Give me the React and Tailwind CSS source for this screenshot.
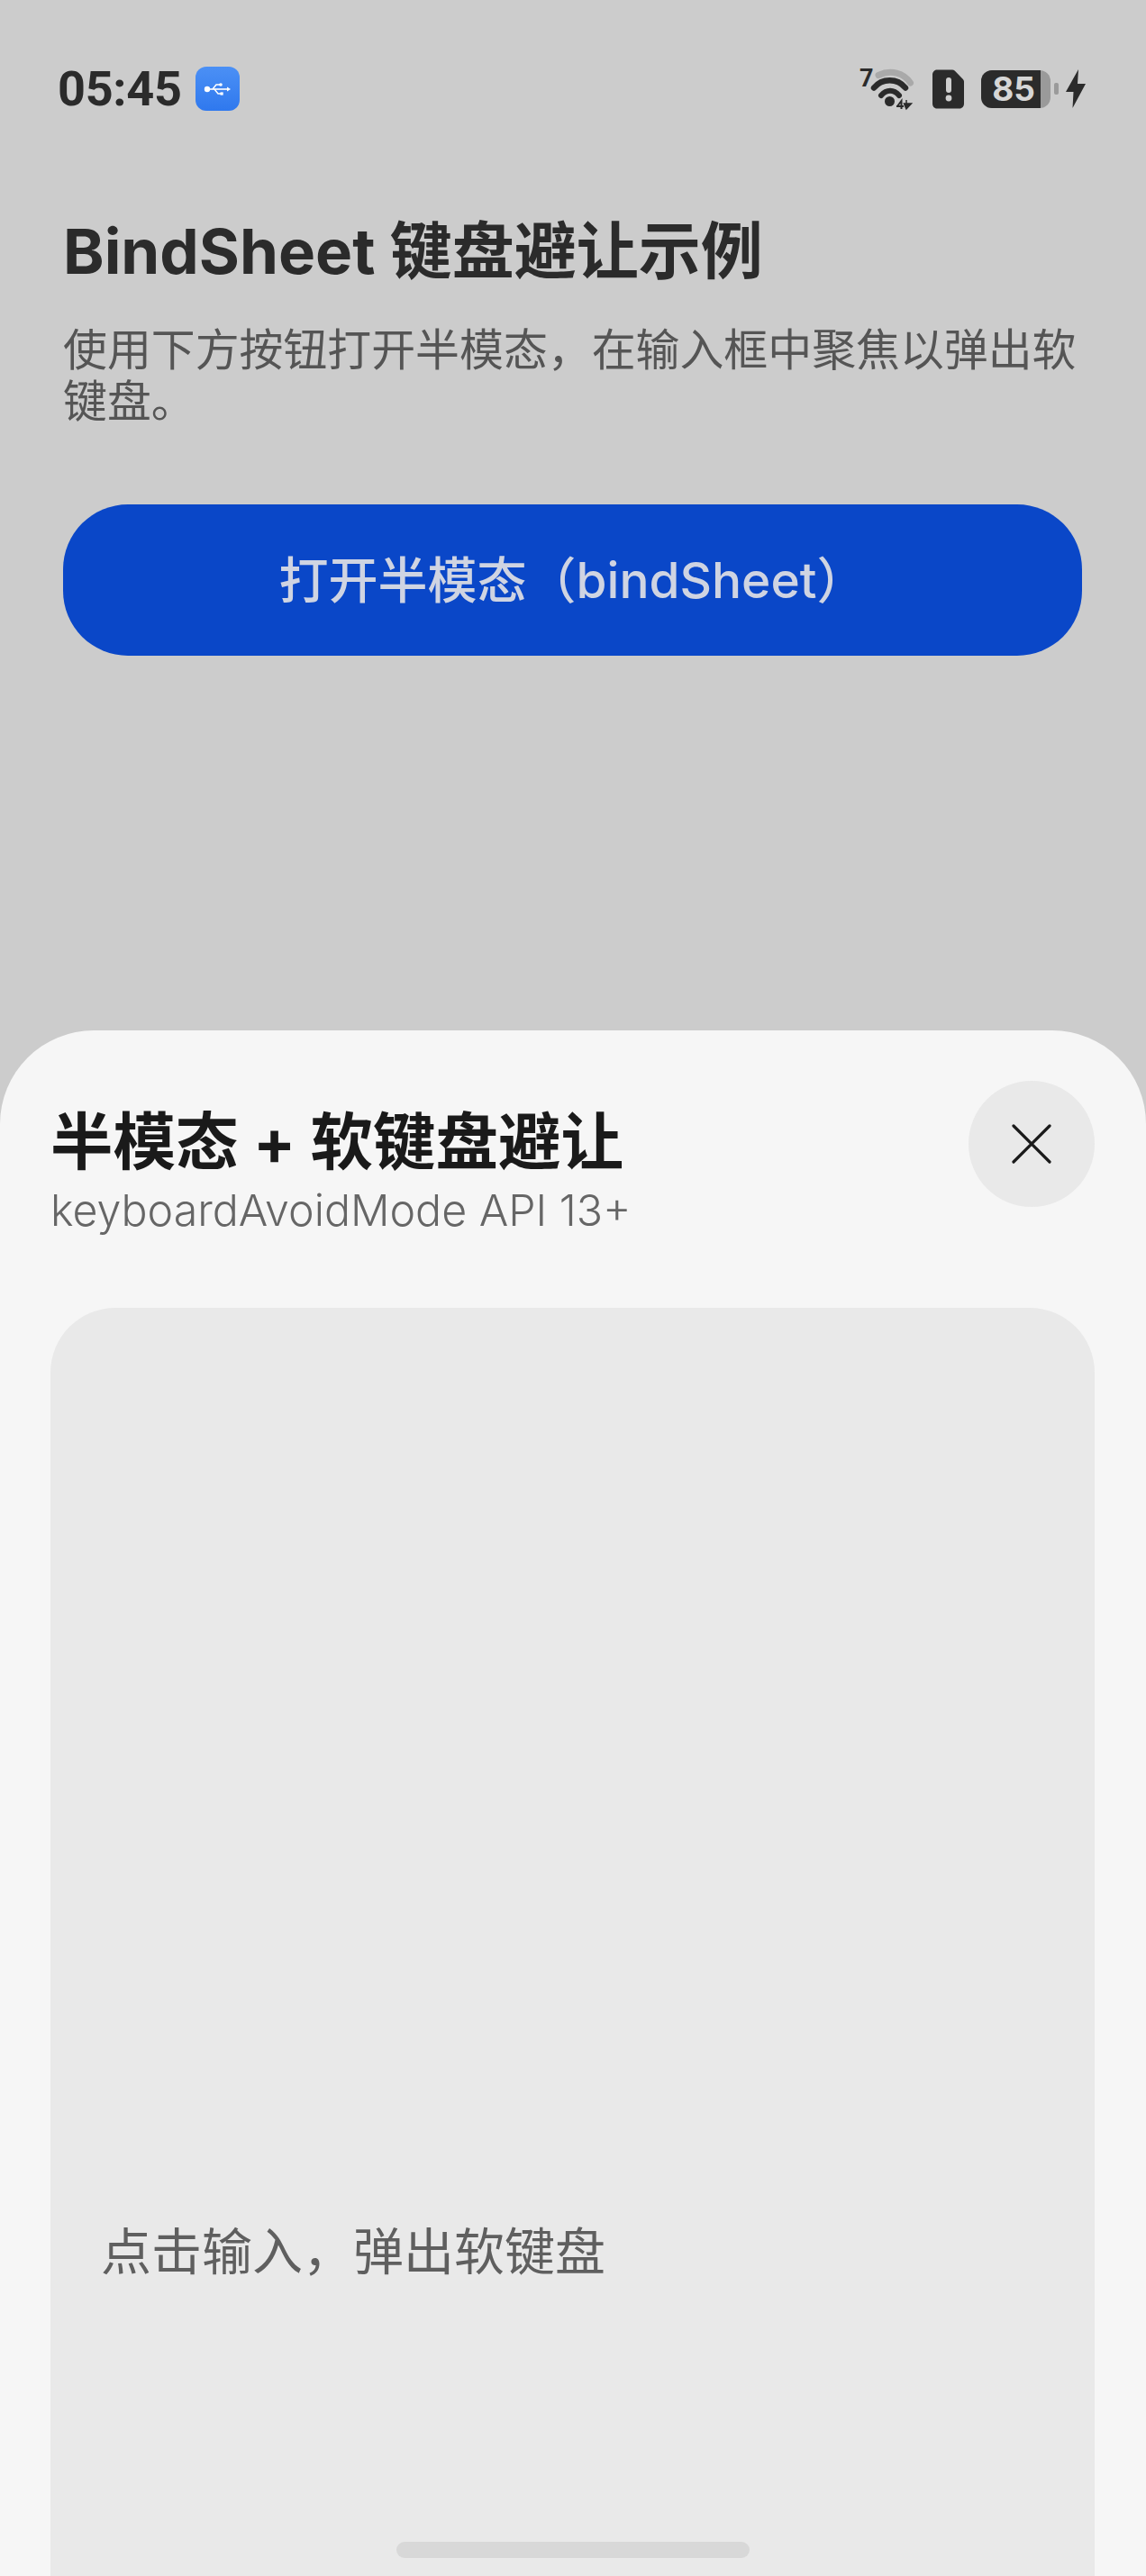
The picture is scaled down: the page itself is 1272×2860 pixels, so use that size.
const fontStack = { fontFamily: '"Inter", "Noto Sans CJK SC", sans-serif' };

function UsbBadge() {
  return (
    <div className="w-[49px] h-[49px] rounded-[12px] bg-gradient-to-b from-[#4b90f5] to-[#2f78ee] flex items-center justify-center">
      <svg width="31" height="16" viewBox="0 0 31 16" fill="none">
        <circle cx="4" cy="8" r="3.2" fill="#fff" />
        <path d="M4 8h24" stroke="#fff" strokeWidth="1.6" />
        <path d="M26 5.5l4 2.5-4 2.5z" fill="#fff" />
        <path d="M10 8l4-5h4M12 8l4 5h3" stroke="#fff" strokeWidth="1.5" fill="none" />
        <circle cx="19" cy="3" r="1.8" fill="#fff" />
        <rect x="18.5" y="11.4" width="3.2" height="3.2" fill="#fff" />
      </svg>
    </div>
  );
}

function WifiIcon() {
  return (
    <svg width="64" height="62" viewBox="0 -6 64 62" fill="none">
      <text x="0" y="22" fontSize="27" fontWeight="700" fill="#2b2b2b" fontFamily="Roboto, sans-serif">7</text>
      <path d="M21 9.5C35 3 49 7 56.5 18" stroke="#a9a9a9" strokeWidth="7" strokeLinecap="round" />
      <path d="M16 23.5C25 12.5 42 12.5 51 23.5" stroke="#2b2b2b" strokeWidth="6.5" strokeLinecap="round" />
      <path d="M24 32C30 25 38 25 44 32" stroke="#2b2b2b" strokeWidth="6" strokeLinecap="round" />
      <circle cx="33.5" cy="38.5" r="5.5" fill="#2b2b2b" />
      <path d="M42 44l4.5-6v9M41 44h8" stroke="#2b2b2b" strokeWidth="2" />
      <path d="M52 37v8M52 47l-2.5-6h8z" fill="#2b2b2b" stroke="#2b2b2b" strokeWidth="1.5" />
    </svg>
  );
}

function SimAlert() {
  return (
    <svg width="36" height="44" viewBox="0 0 36 44">
      <path d="M5 0.5h17c1 0 2 .4 2.700 1.100l9.200 9.300c.7.700 1.100 1.700 1.100 2.700V38c0 3-2 5.500-5 5.500H5c-3 0-5-2.500-5-5.500V6c0-3 2-5.500 5-5.500z" fill="#2b2b2b" />
      <rect x="15" y="9" width="6" height="17" rx="3" fill="#cfcfcf" />
      <circle cx="18" cy="32" r="3.400" fill="#cfcfcf" />
    </svg>
  );
}

function Battery() {
  return (
    <div className="flex items-center gap-[4px]">
      <div className="w-[77px] h-[42px] rounded-[12px] bg-[#9a9a9a] overflow-hidden">
        <div className="w-[66px] h-full bg-[#2b2b2b] flex items-center justify-end pr-[6px]">
          <span className="text-[37px] leading-none font-bold text-[#d6d6d6]">85</span>
        </div>
      </div>
      <div className="w-[5px] h-[13px] rounded-[2px] bg-[#9a9a9a]" />
    </div>
  );
}

function Bolt() {
  return (
    <svg width="22" height="43" viewBox="0 0 22 43">
      <path d="M14 0L0 25h8.500L7.500 43 22 16h-9z" fill="#2b2b2b" />
    </svg>
  );
}

function StatusBar() {
  return (
    <div className="flex items-center justify-between pl-[64px] pr-[67px] pt-[73px] h-[124px]">
      <div className="flex items-center gap-[15px]">
        <span className="font-['Roboto'] text-[54px] leading-none font-bold text-[#2b2b2b] tracking-[-0.3px]">05:45</span>
        <UsbBadge />
      </div>
      <div className="flex items-center">
        <WifiIcon />
        <div className="ml-[17px]"><SimAlert /></div>
        <div className="ml-[18px]"><Battery /></div>
        <div className="ml-[8px]"><Bolt /></div>
      </div>
    </div>
  );
}

export default function App() {
  return (
    <div style={fontStack} className="w-[1272px] h-[2860px] bg-[#cccccc] flex flex-col overflow-hidden relative">
      <StatusBar />

      <div className="pl-[70px] pr-[71px] pt-[115px]">
        <h1 className="text-[69px] leading-[80px] font-bold text-[#2b2b2b]">BindSheet 键盘避让示例</h1>
        <p className="mt-[41px] text-[48.9px] leading-[57px] text-[#555555]">
          使用下方按钮打开半模态，在输入框中聚焦以弹出软键盘。
        </p>
        <button className="mt-[86px] w-full h-[168px] rounded-[72px] bg-[#0a47c8] text-[#cfd4e2] text-[55px] font-medium flex items-center justify-center">
          打开半模态（bindSheet）
        </button>
      </div>

      <div className="mt-auto h-[1716px] bg-[#f6f6f6] rounded-t-[104px] flex flex-col pl-[56px] pr-[57px] pt-[56px] relative">
        <div className="flex justify-between items-start">
          <div className="pt-[30px]">
            <h2 className="text-[69.5px] leading-[76px] font-bold text-[#1a1a1a]">半模态 + 软键盘避让</h2>
            <p className="mt-[8px] text-[48.3px] leading-[60px] font-light text-[#666666]">keyboardAvoidMode API 13+</p>
          </div>
          <button className="w-[140px] h-[140px] rounded-full bg-[#e9e9e9] flex items-center justify-center">
            <svg width="44" height="44" viewBox="0 0 44 44" fill="none">
              <path d="M2 2l40 40M42 2L2 42" stroke="#1a1a1a" strokeWidth="3.200" strokeLinecap="round" />
            </svg>
          </button>
        </div>

        <div className="mt-[78px] flex-1 bg-[#e9e9e9] rounded-t-[72px] pl-[56px] flex flex-col justify-end pb-[327px]">
          <span className="text-[56px] leading-[66px] text-[#5f5f5f]">点击输入，弹出软键盘</span>
        </div>

        <div className="absolute bottom-[20px] left-[440px] w-[392px] h-[18px] rounded-full bg-[#d8d8d8]" />
      </div>
    </div>
  );
}
